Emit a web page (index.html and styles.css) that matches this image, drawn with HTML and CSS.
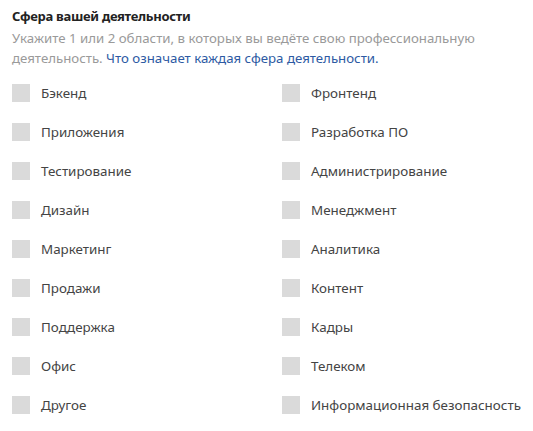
FILE: index.html
```html
<!DOCTYPE html>
<html lang="ru">
<head>
<meta charset="utf-8">
<link rel="stylesheet" href="styles.css">
</head>
<body>
<div class="section">
  <div class="title">Сфера вашей деятельности</div>
  <div class="hint">Укажите 1 или 2 области, в которых вы ведёте свою профессиональную деятельность. <a class="link" href="#">Что означает каждая сфера деятельности.</a></div>
  <div class="grid">
    <label class="item"><span class="box"></span><span class="label">Бэкенд</span></label>
    <label class="item"><span class="box"></span><span class="label">Фронтенд</span></label>
    <label class="item"><span class="box"></span><span class="label">Приложения</span></label>
    <label class="item"><span class="box"></span><span class="label">Разработка ПО</span></label>
    <label class="item"><span class="box"></span><span class="label">Тестирование</span></label>
    <label class="item"><span class="box"></span><span class="label">Администрирование</span></label>
    <label class="item"><span class="box"></span><span class="label">Дизайн</span></label>
    <label class="item"><span class="box"></span><span class="label">Менеджмент</span></label>
    <label class="item"><span class="box"></span><span class="label">Маркетинг</span></label>
    <label class="item"><span class="box"></span><span class="label">Аналитика</span></label>
    <label class="item"><span class="box"></span><span class="label">Продажи</span></label>
    <label class="item"><span class="box"></span><span class="label">Контент</span></label>
    <label class="item"><span class="box"></span><span class="label">Поддержка</span></label>
    <label class="item"><span class="box"></span><span class="label">Кадры</span></label>
    <label class="item"><span class="box"></span><span class="label">Офис</span></label>
    <label class="item"><span class="box"></span><span class="label">Телеком</span></label>
    <label class="item"><span class="box"></span><span class="label">Другое</span></label>
    <label class="item"><span class="box"></span><span class="label">Информационная безопасность</span></label>
  </div>
</div>
</body>
</html>
```
FILE: styles.css
```css
html, body {
  margin: 0;
  padding: 0;
  background: #fff;
}
body {
  font-family: "Noto Sans", "Open Sans", sans-serif;
  color: #333;
}
.section {
  padding: 6px 12px 0 12px;
}
.title {
  font-size: 13px;
  font-weight: bold;
  letter-spacing: -0.3px;
  line-height: 20px;
  color: #222;
}
.hint {
  font-size: 13.25px;
  line-height: 20px;
  color: #9a9a9a;
  margin-top: 2px;
}
.link {
  color: #2d5aa3;
  text-decoration: none;
}
.grid {
  display: grid;
  grid-template-columns: 270px 1fr;
  grid-auto-rows: 39px;
  margin-top: 5px;
}
.item {
  display: flex;
  align-items: center;
  gap: 11px;
  font-size: 13.4px;
  color: #444;
  white-space: nowrap;
}
.box {
  width: 18px;
  height: 18px;
  background: #dadada;
  flex: none;
}
```
